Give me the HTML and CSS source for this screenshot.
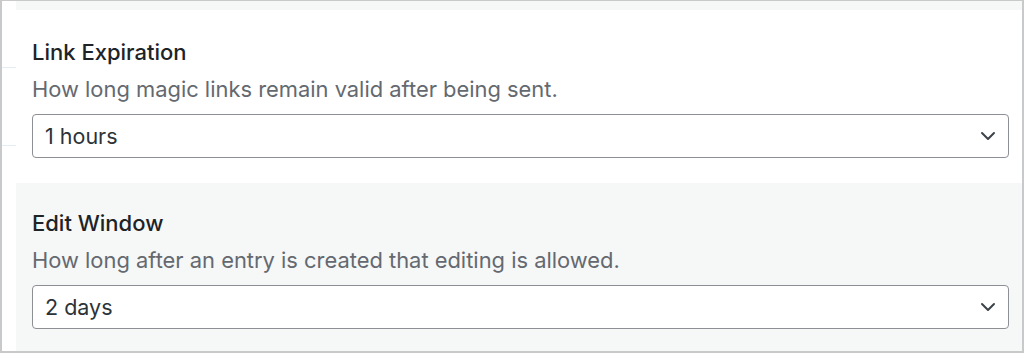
FILE: index.html
```html
<!DOCTYPE html>
<html>
<head>
<meta charset="utf-8">
<link rel="stylesheet" href="styles.css">
</head>
<body>
<div class="frame">
  <div class="gutter">
    <div class="gline first"></div>
    <div class="gline second"></div>
  </div>
  <div class="main">
    <div class="topstrip"></div>
    <section class="field white">
      <h3 class="label">Link Expiration</h3>
      <p class="desc">How long magic links remain valid after being sent.</p>
      <div class="select">
        <span class="value">1 hours</span>
        <svg class="chev" width="16" height="10" viewBox="0 0 16 10"><path d="M2 2 L8 8 L14 2" fill="none" stroke="#3c434a" stroke-width="2" stroke-linecap="round" stroke-linejoin="round"/></svg>
      </div>
    </section>
    <section class="field gray">
      <h3 class="label">Edit Window</h3>
      <p class="desc">How long after an entry is created that editing is allowed.</p>
      <div class="select">
        <span class="value">2 days</span>
        <svg class="chev" width="16" height="10" viewBox="0 0 16 10"><path d="M2 2 L8 8 L14 2" fill="none" stroke="#3c434a" stroke-width="2" stroke-linecap="round" stroke-linejoin="round"/></svg>
      </div>
    </section>
  </div>
</div>
</body>
</html>
```
FILE: styles.css
```css
html, body {
  margin: 0;
  padding: 0;
  background: #ffffff;
}
.frame {
  width: 1024px;
  height: 353px;
  box-sizing: border-box;
  border-left: 2px solid #c8c9cb;
  border-top: 1px solid #c8c9cb;
  border-right: 2px solid #c8c9cb;
  border-bottom: 2px solid #c8c9cb;
  display: flex;
  overflow: hidden;
  font-family: Inter, "Noto Sans", sans-serif;
}
.gutter {
  width: 14px;
  flex: none;
  display: flex;
  flex-direction: column;
  padding-top: 66px;
  background: #ffffff;
}
.gline {
  height: 1px;
  background: #e4edf4;
}
.gline.second {
  margin-top: 77px;
}
.main {
  flex: 1;
  display: flex;
  flex-direction: column;
}
.topstrip {
  height: 9px;
  background: #f6f7f7;
  flex: none;
}
.field {
  padding: 28px 13px 25px 16px;
}
.field.white {
  background: #ffffff;
}
.field.gray {
  background: #f6f7f7;
  flex: 1;
  padding-top: 26px;
}
.label {
  margin: 0;
  font-size: 22px;
  line-height: 28px;
  font-weight: 500;
  color: #1d2327;
}
.desc {
  margin: 9px 0 11px;
  font-size: 21.9px;
  line-height: 28px;
  color: #646970;
}
.select {
  height: 44px;
  box-sizing: border-box;
  border: 1px solid #8c8f94;
  border-radius: 4px;
  background: #ffffff;
  display: flex;
  align-items: center;
  justify-content: space-between;
  padding: 0 12px 0 12px;
}
.value {
  font-size: 21.5px;
  color: #2c3338;
}
.chev {
  display: block;
}
```
